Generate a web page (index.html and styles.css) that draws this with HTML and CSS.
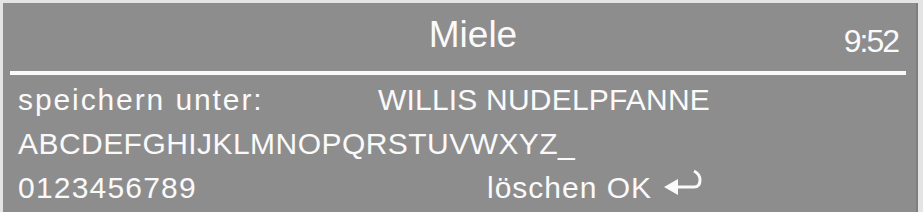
FILE: index.html
```html
<!DOCTYPE html>
<html lang="de">
<head>
    <meta charset="UTF-8">
    <meta name="viewport" content="width=device-width, initial-scale=1.0">
    <title>Miele</title>
    <link rel="stylesheet" href="styles.css">
</head>
<body>
    <div class="screen">
        <div class="header">
            <span></span>
            <span class="title">Miele</span>
            <span class="time">9:52</span>
        </div>
        <div class="rule"></div>
        <div class="row">
            <span class="label">speichern unter:</span>
            <span class="name">WILLIS NUDELPFANNE</span>
        </div>
        <div class="row">
            <span class="letters">ABCDEFGHIJKLMNOPQRSTUVWXYZ_</span>
        </div>
        <div class="row">
            <span class="digits">0123456789</span>
            <span class="actions">löschen OK</span>
            <svg class="enter" width="42" height="32" viewBox="0 0 42 32">
                <polygon points="2,20 16,12 16,28" fill="#fafafa"/>
                <path d="M15 20 H32 Q38 20 38 13 Q38 7 32 4" fill="none" stroke="#fafafa" stroke-width="3"/>
            </svg>
        </div>
    </div>
</body>
</html>
```

FILE: styles.css
```css
body {
    margin: 0;
    background-color: #e4e4e4;
    font-family: "Liberation Sans", Arial, sans-serif;
    color: #fafafa;
}

.screen {
    margin: 3px 5px 0 3px;
    height: 209px;
    background-color: #8e8d8e;
    border-right: 2px solid #7f7e7f;
}

.header {
    display: grid;
    grid-template-columns: 1fr auto 1fr;
    height: 68px;
}

.title {
    margin-left: 27px;
    margin-top: 13px;
    font-size: 37px;
    line-height: 37px;
    height: 37px;
}

.time {
    justify-self: end;
    margin-top: 22px;
    margin-right: 18px;
    font-size: 32px;
    line-height: 32px;
    height: 32px;
    letter-spacing: -2px;
}

.rule {
    height: 4px;
    margin: 0 10px 3px 7px;
    background-color: #fafafa;
}

.row {
    display: flex;
    align-items: center;
    height: 44px;
    padding-left: 15px;
    font-size: 30px;
    line-height: 44px;
    white-space: nowrap;
}

.label {
    width: 360px;
    letter-spacing: 1.9px;
}

.name {
    letter-spacing: 0.2px;
}

.letters {
    letter-spacing: 0.45px;
}

.digits {
    width: 469px;
    letter-spacing: 1.2px;
}

.actions {
    letter-spacing: 1px;
    margin-right: 10px;
}

.enter {
    margin-top: -10px;
}
```
